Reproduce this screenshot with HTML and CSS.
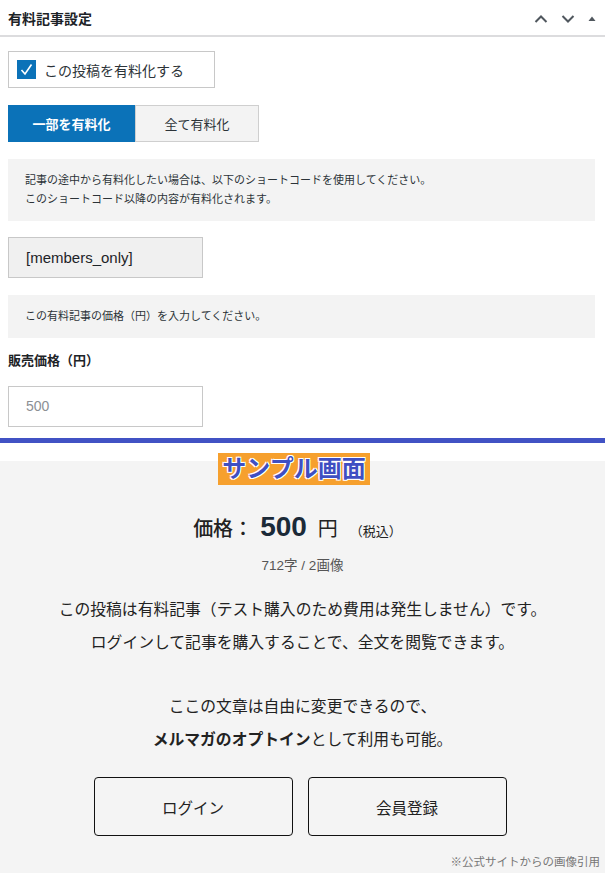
FILE: index.html
```html
<!DOCTYPE html>
<html lang="ja">
<head>
    <meta charset="UTF-8">
    <title>有料記事設定</title>
    <meta name="viewport" content="width=device-width, initial-scale=1.0">
    <link rel="stylesheet" href="styles.css">
</head>
<body>
    <div class="panel">
        <div class="panel-head">
            <h2>有料記事設定</h2>
            <div class="head-icons">
                <svg width="14" height="10" viewBox="0 0 14 10"><path d="M1.5 8 L7 2.5 L12.5 8" fill="none" stroke="#50575e" stroke-width="2"/></svg>
                <svg width="14" height="10" viewBox="0 0 14 10"><path d="M1.5 2 L7 7.5 L12.5 2" fill="none" stroke="#50575e" stroke-width="2"/></svg>
                <svg width="8" height="10" viewBox="0 0 8 10"><path d="M0.5 7 L4 2.5 L7.5 7 Z" fill="#50575e"/></svg>
            </div>
        </div>

        <div class="panel-body">
            <label class="check-box">
                <span class="check">
                    <svg width="19" height="19" viewBox="0 0 19 19"><path d="M4.5 10 L8 14 L14.5 4.5" fill="none" stroke="#fff" stroke-width="1.6"/></svg>
                </span>
                この投稿を有料化する
            </label>

            <div class="toggle">
                <button class="toggle-btn active">一部を有料化</button>
                <button class="toggle-btn">全て有料化</button>
            </div>

            <div class="notice">
                記事の途中から有料化したい場合は、以下のショートコードを使用してください。<br>
                このショートコード以降の内容が有料化されます。
            </div>

            <div class="shortcode">[members_only]</div>

            <div class="notice">この有料記事の価格（円）を入力してください。</div>

            <div class="field-label">販売価格（円）</div>
            <div class="price-input">500</div>
        </div>
    </div>

    <div class="divider"></div>

    <section class="preview">
        <span class="sample-badge">サンプル画面</span>

        <div class="price-line">
            <span class="price-label">価格：</span>
            <span class="price-num">500</span>
            <span class="price-yen">円</span>
            <span class="price-tax">（税込）</span>
        </div>
        <div class="count">712字 / 2画像</div>

        <p class="lead">この投稿は有料記事（テスト購入のため費用は発生しません）です。<br>ログインして記事を購入することで、全文を閲覧できます。</p>
        <p class="lead">ここの文章は自由に変更できるので、<br><strong>メルマガのオプトイン</strong>として利用も可能。</p>

        <div class="actions">
            <a class="action-btn">ログイン</a>
            <a class="action-btn">会員登録</a>
        </div>

        <div class="credit">※公式サイトからの画像引用</div>
    </section>
</body>
</html>
```

FILE: styles.css
```css
body {
    font-family: "Liberation Sans", "Noto Sans CJK JP", sans-serif;
    background-color: #ffffff;
    color: #1d2327;
    margin: 0;
    padding: 0;
}
.panel-head {
    display: flex;
    align-items: center;
    justify-content: space-between;
    height: 35px;
    padding: 0 7px 0 8px;
    border-bottom: 2px solid #dcdcde;
}
.panel-head h2 {
    margin: 0;
    font-size: 14px;
    font-weight: bold;
}
.head-icons {
    display: flex;
    align-items: center;
    gap: 13px;
    padding-top: 2px;
    padding-right: 2px;
}
.panel-body {
    padding: 14px 10px 0 8px;
}
.check-box {
    display: flex;
    align-items: center;
    gap: 8px;
    width: 197px;
    height: 35px;
    padding-left: 8px;
    border: 1px solid #c8c8c8;
    font-size: 14px;
    color: #2c3338;
}
.check {
    width: 19px;
    height: 19px;
    background-color: #0b72b8;
    display: flex;
}
.toggle {
    display: flex;
    margin-top: 17px;
}
.toggle-btn {
    height: 37px;
    width: 124px;
    font-family: inherit;
    font-size: 13px;
    color: #2c3338;
    background-color: #f3f3f3;
    border: 1px solid #cfcfcf;
    padding: 0;
}
.toggle-btn.active {
    width: 127px;
    background-color: #0b72b8;
    border-color: #0b72b8;
    color: #ffffff;
    font-weight: bold;
}
.notice {
    margin-top: 17px;
    padding: 12px 17px;
    background-color: #f3f3f3;
    font-size: 11px;
    line-height: 19px;
    color: #2c3338;
}
.shortcode {
    margin-top: 16px;
    width: 176px;
    height: 39px;
    line-height: 39px;
    padding-left: 17px;
    background-color: #f0f0f0;
    border: 1px solid #c8c8c8;
    font-size: 15px;
    color: #1d2327;
}
.field-label {
    margin-top: 13px;
    font-size: 13px;
    font-weight: bold;
    line-height: 20px;
}
.price-input {
    margin-top: 15px;
    width: 176px;
    height: 39px;
    line-height: 39px;
    padding-left: 17px;
    border: 1px solid #c8c8c8;
    font-size: 14px;
    color: #8c8f94;
}
.divider {
    margin-top: 11px;
    height: 5px;
    background-color: #4152c4;
}
.preview {
    position: relative;
    margin-top: 18px;
    padding: 46px 0 3px;
    background-color: #f4f4f4;
    text-align: center;
    color: #222222;
}
.sample-badge {
    position: absolute;
    left: 218px;
    top: -8px;
    width: 152px;
    height: 32px;
    line-height: 32px;
    background-color: #f6a02e;
    color: #3f4fc2;
    font-size: 24px;
    font-weight: bold;
    text-shadow: 1px 1px 0 #fff, -1px -1px 0 #fff, 1px -1px 0 #fff, -1px 1px 0 #fff;
}
.price-line {
    height: 40px;
    display: flex;
    align-items: baseline;
    justify-content: center;
    line-height: 40px;
    padding-right: 10px;
}
.price-label {
    font-size: 20px;
    font-weight: 500;
}
.price-num {
    font-size: 28px;
    font-weight: bold;
    color: #1b2a38;
    margin: 0 11px 0 7px;
}
.price-yen {
    font-size: 20px;
    margin-right: 12px;
}
.price-tax {
    font-size: 13px;
}
.count {
    margin-top: 10px;
    font-size: 13.5px;
    line-height: 18px;
    color: #555555;
}
.lead {
    margin: 19px 0 0;
    font-size: 15.8px;
    line-height: 32.5px;
}
.lead + .lead {
    margin-top: 32px;
}
.actions {
    display: flex;
    justify-content: center;
    gap: 15px;
    margin-top: 21px;
    padding-right: 5px;
}
.action-btn {
    width: 197px;
    height: 57px;
    display: flex;
    align-items: center;
    justify-content: center;
    border: 1.5px solid #111111;
    border-radius: 4px;
    font-size: 15.5px;
    color: #222222;
}
.credit {
    margin-top: 18px;
    padding-right: 5px;
    text-align: right;
    font-size: 11.5px;
    line-height: 16px;
    color: #777777;
}
```
